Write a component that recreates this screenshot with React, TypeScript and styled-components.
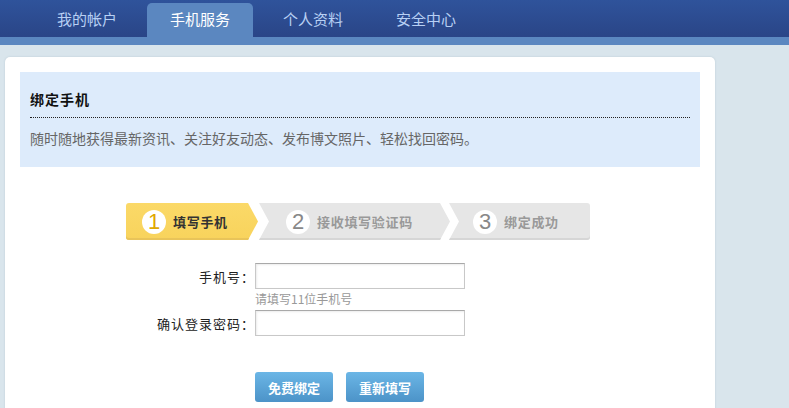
import styled, { createGlobalStyle } from "styled-components";

const Global = createGlobalStyle`
    html, body {
        margin: 0;
        padding: 0;
        background: #d9e5ec;
        font-family: "Noto Sans CJK SC", "Liberation Sans", sans-serif;
    }
    * { box-sizing: border-box; }
`;

const Page = styled.div`
    width: 789px;
    height: 408px;
    overflow: hidden;
    background: #d9e5ec;
`;

const NavBar = styled.nav`
    height: 37px;
    background: linear-gradient(#2f539b, #2a4587);
    display: flex;
    align-items: flex-end;
    gap: 7px;
    padding-left: 34px;
`;

const Tab = styled.a<{ $active?: boolean }>`
    width: 106px;
    height: 34px;
    display: flex;
    align-items: center;
    justify-content: center;
    font-size: 15px;
    color: ${p => (p.$active ? "#ffffff" : "#b8d0f4")};
    background: ${p => (p.$active ? "#5b87c0" : "transparent")};
    border-radius: 5px 5px 0 0;
    text-decoration: none;
    padding-bottom: 3px;
`;

const Strip = styled.div`
    height: 8px;
    background: #5b87c0;
`;

const Body = styled.div`
    padding: 12px 74px 0 5px;
`;

const Card = styled.section`
    background: #fff;
    border-radius: 5px 5px 0 0;
    box-shadow: 0 0 2px rgba(120, 150, 170, 0.35);
    padding: 15px 15px 30px;
    height: 360px;
`;

const Info = styled.div`
    background: #ddebfb;
    padding: 17px 10px 18px;
`;

const Title = styled.h2`
    margin: 0;
    font-size: 14px;
    font-weight: bold;
    letter-spacing: 1px;
    color: #111;
    line-height: 20px;
    padding-bottom: 8px;
    border-bottom: 1px dotted #222;
`;

const Desc = styled.p`
    margin: 9px 0 0;
    font-size: 14px;
    color: #666;
    line-height: 22px;
`;

const Steps = styled.div`
    display: flex;
    margin: 36px 0 0 106px;
`;

const Step = styled.div<{ $w: number; $pad: number; $kind: "first" | "mid" | "last"; $on?: boolean }>`
    width: ${p => p.$w}px;
    height: 37px;
    margin-left: ${p => (p.$kind === "first" ? 0 : p.$kind === "mid" ? 1 : -1)}px;
    padding-left: ${p => p.$pad}px;
    display: flex;
    align-items: center;
    gap: 7px;
    background: ${p => (p.$on ? "linear-gradient(#fbd968, #f8d35c)" : "#e6e6e6")};
    box-shadow: inset 0 -2px 0 ${p => (p.$on ? "#e9c459" : "#d6d6d6")};
    border-radius: ${p => (p.$kind === "first" ? "3px 0 0 3px" : p.$kind === "last" ? "0 3px 3px 0" : "0")};
    clip-path: ${p =>
        p.$kind === "first"
            ? "polygon(0 0, calc(100% - 10px) 0, 100% 50%, calc(100% - 10px) 100%, 0 100%)"
            : p.$kind === "mid"
            ? "polygon(0 0, calc(100% - 10px) 0, 100% 50%, calc(100% - 10px) 100%, 0 100%, 10px 50%)"
            : "polygon(0 0, 100% 0, 100% 100%, 0 100%, 10px 50%)"};
`;

const Num = styled.span<{ $on?: boolean }>`
    width: 24px;
    height: 24px;
    border-radius: 50%;
    background: #fff;
    display: flex;
    align-items: center;
    justify-content: center;
    font-family: "Liberation Sans", Arial, sans-serif;
    font-size: 22px;
    color: ${p => (p.$on ? "#e0a800" : "#888")};
    line-height: 1;
`;

const StepText = styled.span<{ $on?: boolean }>`
    font-size: 13px;
    font-weight: bold;
    color: ${p => (p.$on ? "#333" : "#999")};
    letter-spacing: 0.7px;
`;

const Form = styled.form`
    display: grid;
    grid-template-columns: 231px 210px;
    column-gap: 4px;
    margin-top: 23px;
    align-items: center;
`;

const Label = styled.label`
    text-align: right;
    font-size: 13px;
    letter-spacing: 1px;
    color: #222;
    margin-right: -4px;
`;

const Input = styled.input`
    width: 210px;
    height: 26px;
    border: 1px solid #c8c8c8;
    border-top-color: #a9a9a9;
    box-shadow: inset 1px 1px 2px rgba(0, 0, 0, 0.08);
    outline: none;
    padding: 0 4px;
`;

const Hint = styled.span`
    grid-column: 2;
    font-size: 12px;
    color: #999;
    line-height: 18px;
    margin: 1px 0 2px;
`;

const Buttons = styled.div`
    grid-column: 2;
    display: flex;
    gap: 13px;
    margin-top: 36px;
`;

const Btn = styled.button`
    width: 78px;
    height: 30px;
    border: none;
    border-radius: 3px;
    background: linear-gradient(#6bb6e6, #4c93c8);
    color: #fff;
    font-family: "Noto Sans CJK SC", sans-serif;
    font-size: 13px;
    font-weight: bold;
    cursor: pointer;
`;

const tabs = ["我的帐户", "手机服务", "个人资料", "安全中心"];

export default function App() {
    return (
        <Page>
            <Global />
            <NavBar>
                {tabs.map(t => (
                    <Tab key={t} href="#" $active={t === "手机服务"}>{t}</Tab>
                ))}
            </NavBar>
            <Strip />
            <Body>
                <Card>
                    <Info>
                        <Title>绑定手机</Title>
                        <Desc>随时随地获得最新资讯、关注好友动态、发布博文照片、轻松找回密码。</Desc>
                    </Info>
                    <Steps>
                        <Step $w={132} $pad={16} $kind="first" $on>
                            <Num $on>1</Num>
                            <StepText $on>填写手机</StepText>
                        </Step>
                        <Step $w={191} $pad={27} $kind="mid">
                            <Num>2</Num>
                            <StepText>接收填写验证码</StepText>
                        </Step>
                        <Step $w={141} $pad={24} $kind="last">
                            <Num>3</Num>
                            <StepText>绑定成功</StepText>
                        </Step>
                    </Steps>
                    <Form onSubmit={e => e.preventDefault()}>
                        <Label htmlFor="phone">手机号：</Label>
                        <Input id="phone" type="text" />
                        <Hint>请填写11位手机号</Hint>
                        <Label htmlFor="pwd">确认登录密码：</Label>
                        <Input id="pwd" type="password" />
                        <Buttons>
                            <Btn type="submit">免费绑定</Btn>
                            <Btn type="reset">重新填写</Btn>
                        </Buttons>
                    </Form>
                </Card>
            </Body>
        </Page>
    );
}
